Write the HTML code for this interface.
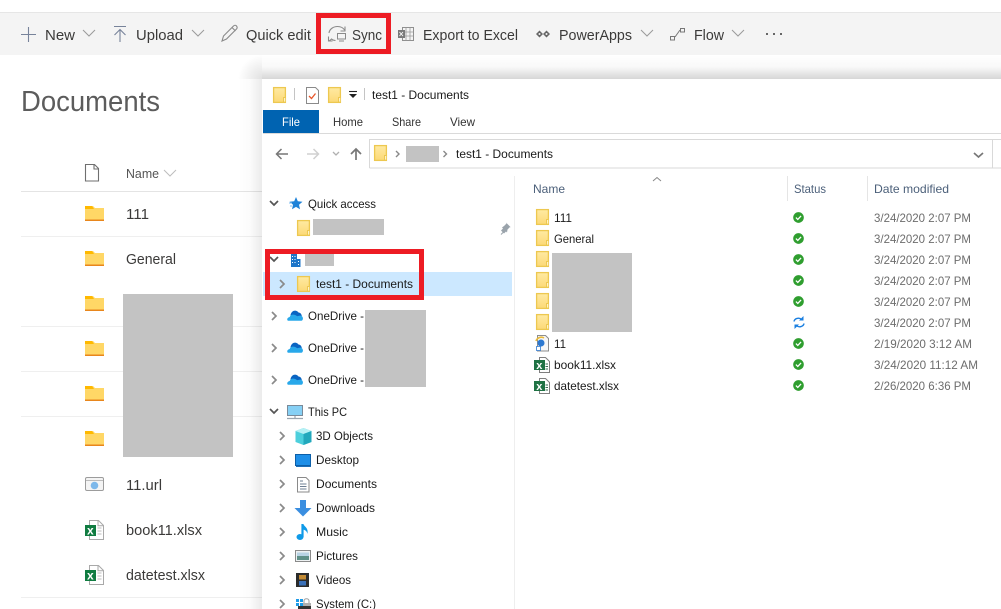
<!DOCTYPE html>
<html><head><meta charset="utf-8"><style>
html,body{margin:0;padding:0;background:#fff;width:1001px;height:609px;overflow:hidden}
svg{display:block;position:absolute;left:0;top:0}
text{font-family:"Liberation Sans",sans-serif;white-space:pre}
.t{font-size:15px;fill:#3b3a39}
.e{font-size:12px;fill:#1a1a1a}
.d{font-size:12px;fill:#6d6d6d}
.h{font-size:12px;fill:#4c607a}
.r{font-size:12px;fill:#333}
.c{fill:none;stroke:#8a8a8a;stroke-width:1.7}
</style></head><body>
<svg width="1001" height="609" viewBox="0 0 1001 609" xmlns="http://www.w3.org/2000/svg">
<defs>
<linearGradient id="st" x1="0" y1="0" x2="0" y2="1"><stop offset="0" stop-color="#000" stop-opacity="0"/><stop offset=".5" stop-color="#000" stop-opacity=".025"/><stop offset="1" stop-color="#000" stop-opacity=".16"/></linearGradient>
<linearGradient id="sl" x1="0" y1="0" x2="1" y2="0"><stop offset="0" stop-color="#000" stop-opacity="0"/><stop offset=".5" stop-color="#000" stop-opacity=".015"/><stop offset="1" stop-color="#000" stop-opacity=".08"/></linearGradient>
<radialGradient id="sc" cx="1" cy="1" r="1"><stop offset="0" stop-color="#000" stop-opacity=".12"/><stop offset="1" stop-color="#000" stop-opacity="0"/></radialGradient>
<linearGradient id="fy" x1="0" y1="0" x2="0" y2="1"><stop offset="0" stop-color="#ffeaa2"/><stop offset="1" stop-color="#fcd976"/></linearGradient>
<symbol id="f" viewBox="0 0 13 16" overflow="visible"><rect x=".6" y=".6" width="11.800" height="14.800" fill="url(#fy)" stroke="#edc850" stroke-width="1.300"/><rect x="10" y="10" width="3" height="6" fill="#edc850"/><rect x="11" y="11" width="1.200" height="3.600" fill="#fff2c4"/></symbol>
<symbol id="sp" viewBox="0 0 19 15"><path d="M0 0h8l2 2h9v13H0z" fill="#ffd766"/><path d="M0 0h7l2 3H0z" fill="#ffb900"/><rect y="13.500" width="19" height="1.500" fill="#e8861c"/></symbol>
<symbol id="ok" viewBox="0 0 12 12"><circle cx="6" cy="6" r="5.800" fill="#2f9e2f"/><path d="M3.200 6.100l2 2 3.600-3.800" fill="none" stroke="#fff" stroke-width="1.400"/></symbol>
<symbol id="x1" viewBox="0 0 19 20"><path d="M4.500.5h9l5 5v14h-14z" fill="#fff" stroke="#a9a9a9"/><path d="M13 .5v5.300h5.500" fill="none" stroke="#a9a9a9"/><path d="M12.500 8h4M12.500 11h4M12.500 14h4" stroke="#bcbcbc"/><rect y="5" width="11" height="11" fill="#107c41"/><text x="2" y="14.500" style="font-size:12px;font-weight:bold;fill:#fff">x</text></symbol>
<symbol id="x2" viewBox="0 0 16 16"><path d="M5.500.5h6l4 4v11h-10z" fill="#fff" stroke="#7f7f7f"/><path d="M11.500 7h2.500M11.500 9.500h2.500M11.500 12h2.500" stroke="#3a6d52"/><rect y="3" width="11" height="10" fill="#1f7244"/><text x="2.200" y="12" style="font-size:11px;font-weight:bold;fill:#fff">x</text></symbol>
<symbol id="od" viewBox="0 0 16 11"><path d="M3.500 5C4.500.5 9-.8 11.500 2.500 13.500 2.700 14.500 4 14.800 6L4 7z" fill="#0a64c2"/><path d="M1 10.800h13.500c2-.6 2-4.300-.5-5-1.500-.4-2.500 0-3.500.7C8.500 4.500 5.500 4 3.500 5.500 3 6.200 2.800 6.700 2.700 7 0 7.500-.4 10 1 10.800z" fill="#28a8ea"/></symbol>
</defs>

<!-- SharePoint -->
<rect x="0" y="12" width="1001" height="1" fill="#e6e6e6"/>
<rect x="0" y="13" width="1001" height="42" fill="#f4f4f4"/>

<path d="M21 34.500h15M28.500 27v15" stroke="#77839a" stroke-width="1.100" fill="none"/>
<text class="t" x="45" y="40" textLength="30" lengthAdjust="spacingAndGlyphs">New</text>
<path d="M83 30l6 6 6-6" fill="none" stroke="#9a9a9a" stroke-width="1"/>
<path d="M114 26.500h12M120 42V29.500M114.500 35l5.500-5.500 5.500 5.500" fill="none" stroke="#77839a" stroke-width="1.100"/>
<text class="t" x="136" y="40" textLength="47" lengthAdjust="spacingAndGlyphs">Upload</text>
<path d="M192 30l6 6 6-6" fill="none" stroke="#9a9a9a" stroke-width="1"/>
<path d="M222 41l1.500-5 10-10c1-1 2.200-1 3 0s1 2 0 3l-10 10zM232 27.500l3.500 3.500" fill="none" stroke="#8a8a8a" stroke-width="1.100"/>
<text class="t" x="246" y="40" textLength="65" lengthAdjust="spacingAndGlyphs">Quick edit</text>
<path d="M329 33c.5-4 4.500-6.500 8.500-6.500 3 0 5.500 1 7 3.500M345 26.500V31h-4.500M328.500 36.500v4.500h4M329 41c1.500-1 2-1.500 2.500-2 1 1 2 1.500 4 1.500" fill="none" stroke="#8a8a8a" stroke-width="1.100"/>
<rect x="337.500" y="33.500" width="8" height="5.500" fill="none" stroke="#8a8a8a" stroke-width="1"/>
<path d="M339 41h5" stroke="#8a8a8a"/>
<text class="t" x="352" y="40" textLength="30" lengthAdjust="spacingAndGlyphs">Sync</text>
<rect x="318.500" y="15.500" width="70" height="36" fill="none" stroke="#ed1c24" stroke-width="5"/>

<rect x="402.500" y="27.500" width="11" height="13" fill="none" stroke="#8f8f8f"/>
<path d="M406 27.500v13M410 27.500v13M402.500 32h11M402.500 36h11" stroke="#9a9a9a" stroke-width=".8"/>
<rect x="398" y="30" width="7" height="8" fill="#7a7a7a"/>
<path d="M399.500 32l3.500 4M403 32l-3.500 4" stroke="#fff" stroke-width=".9"/>
<text class="t" x="423" y="40" textLength="95" lengthAdjust="spacingAndGlyphs">Export to Excel</text>
<path d="M536 34l3.500-3.500 3.500 3.500-3.500 3.500zM543 34l3.500-3.500 3.500 3.500-3.500 3.500z" fill="#666"/>
<circle cx="539.500" cy="34" r="1" fill="#f4f4f4"/><circle cx="546.500" cy="34" r="1" fill="#f4f4f4"/>
<text class="t" x="559" y="40" textLength="73" lengthAdjust="spacingAndGlyphs">PowerApps</text>
<path d="M641 30l6 6 6-6" fill="none" stroke="#9a9a9a" stroke-width="1"/>
<rect x="670.500" y="36.500" width="4" height="3.500" fill="none" stroke="#777"/>
<rect x="680.500" y="28.500" width="4" height="3.500" fill="none" stroke="#777"/>
<path d="M675 37l5-7" stroke="#777"/>
<text class="t" x="694" y="40" textLength="30" lengthAdjust="spacingAndGlyphs">Flow</text>
<path d="M732 30l6 6 6-6" fill="none" stroke="#9a9a9a" stroke-width="1"/>
<g fill="#666"><rect x="766" y="33" width="2" height="2"/><rect x="773" y="33" width="2" height="2"/><rect x="780" y="33" width="2" height="2"/></g>

<text x="21" y="111" style="font-size:29px;fill:#5c5c5c" textLength="139" lengthAdjust="spacingAndGlyphs">Documents</text>

<path d="M85.500 164.500h9l4 4v12.500h-13z M94 164.500v4.500h4.500" fill="#fff" stroke="#6f6f6f" stroke-width="1.100"/>
<text x="126" y="178" style="font-size:12.500px;fill:#555" textLength="33" lengthAdjust="spacingAndGlyphs">Name</text>
<path d="M164 170l6 6 6-6" fill="none" stroke="#bdbdbd"/>
<g fill="#efefef">
<rect x="21" y="191" width="241" height="1" fill="#e4e4e4"/>
<rect x="21" y="236" width="241" height="1"/><rect x="21" y="326" width="241" height="1"/><rect x="21" y="371" width="241" height="1"/><rect x="21" y="416" width="241" height="1"/><rect x="21" y="597" width="241" height="1"/>
</g>
<use href="#sp" x="85" y="206" width="19" height="15"/>
<use href="#sp" x="85" y="251" width="19" height="15"/>
<use href="#sp" x="85" y="296" width="19" height="15"/>
<use href="#sp" x="85" y="341" width="19" height="15"/>
<use href="#sp" x="85" y="386" width="19" height="15"/>
<use href="#sp" x="85" y="431" width="19" height="15"/>
<text x="126" y="219" style="font-size:14.500px;fill:#3b3a39" textLength="23" lengthAdjust="spacingAndGlyphs">111</text>
<text x="126" y="264" style="font-size:14.500px;fill:#3b3a39" textLength="50" lengthAdjust="spacingAndGlyphs">General</text>
<rect x="123" y="294" width="110" height="163" fill="#c3c3c3"/>
<rect x="85.500" y="477.500" width="18" height="13" rx="1.500" fill="#f4f4f4" stroke="#9c9c9c"/>
<path d="M86 480.500h17" stroke="#bbb"/>
<circle cx="94.500" cy="485.500" r="3.800" fill="#7db8ea"/>
<text x="126" y="490" style="font-size:14.500px;fill:#3b3a39" textLength="36" lengthAdjust="spacingAndGlyphs">11.url</text>
<use href="#x1" x="85" y="520" width="19" height="20"/>
<text x="126" y="535" style="font-size:14.500px;fill:#3b3a39" textLength="76" lengthAdjust="spacingAndGlyphs">book11.xlsx</text>
<use href="#x1" x="85" y="565" width="19" height="20"/>
<text x="126" y="580" style="font-size:14.500px;fill:#3b3a39" textLength="79" lengthAdjust="spacingAndGlyphs">datetest.xlsx</text>

<!-- shadow -->
<rect x="262" y="55" width="739" height="24" fill="url(#st)"/>
<rect x="238" y="79" width="24" height="530" fill="url(#sl)"/>
<rect x="238" y="55" width="24" height="24" fill="url(#sc)"/>

<!-- Explorer -->
<rect x="262" y="79" width="739" height="530" fill="#fff"/>
<use href="#f" x="273" y="87" width="13" height="16"/>
<path d="M294.500 88v12M364.500 88v12" stroke="#c4c4c4"/>
<path d="M306.500 87.500h9l3 3v13h-12z" fill="#fff" stroke="#8a8a8a"/>
<path d="M309 96l2.500 2.500 4-5" fill="none" stroke="#e8562a" stroke-width="1.300"/>
<use href="#f" x="328" y="87" width="13" height="16"/>
<path d="M349 91.500h8" stroke="#222" stroke-width="1.100"/>
<path d="M349 94h8l-4 4z" fill="#222"/>
<text class="e" x="372" y="99" textLength="97" lengthAdjust="spacingAndGlyphs">test1 - Documents</text>

<rect x="263" y="110" width="56" height="23" fill="#0063b1"/>
<text x="282" y="126" style="font-size:12px;fill:#fff" textLength="18" lengthAdjust="spacingAndGlyphs">File</text>
<text class="r" x="333" y="126" textLength="30" lengthAdjust="spacingAndGlyphs">Home</text>
<text class="r" x="392" y="126" textLength="29" lengthAdjust="spacingAndGlyphs">Share</text>
<text class="r" x="450" y="126" textLength="25" lengthAdjust="spacingAndGlyphs">View</text>
<rect x="263" y="133" width="738" height="1" fill="#dadada"/>

<path d="M288 154h-11M281.500 149l-5 5 5 5" fill="none" stroke="#777" stroke-width="1.500"/>
<path d="M318 154h-11M313.500 149l5 5-5 5" fill="none" stroke="#d0d0d0" stroke-width="1.500"/>
<path d="M333 152l3 3 3-3" fill="none" stroke="#b0b0b0" stroke-width="1.300"/>
<path d="M356 160v-11M351 154l5-5 5 5" fill="none" stroke="#777" stroke-width="1.700"/>
<path d="M369.500 168V139.500H992.500V168H369.500M992.500 139.500H1001M992.500 168H1001" fill="none" stroke="#d9d9d9"/>
<use href="#f" x="374" y="145" width="13" height="16"/>
<path d="M396 151l3 3-3 3" fill="none" stroke="#888" stroke-width="1.400"/>
<rect x="406" y="146" width="33" height="16" fill="#c3c3c3"/>
<path d="M443.500 151l3 3-3 3" fill="none" stroke="#888" stroke-width="1.400"/>
<text class="e" x="456" y="158" textLength="97" lengthAdjust="spacingAndGlyphs">test1 - Documents</text>
<path d="M974 153l4.500 4 4.500-4" fill="none" stroke="#777" stroke-width="1.700"/>

<rect x="514" y="176" width="1" height="433" fill="#eeeeee"/>

<!-- Nav pane -->
<path d="M270 201l4 4 4-4" fill="none" stroke="#555" stroke-width="1.700"/>
<path d="M296 197l1.800 4.300 4.700.4-3.500 3 1 4.600-4-2.400-4 2.400 1-4.600-3.500-3 4.700-.4z" fill="#1e82d8"/>
<path d="M289 203h3M290 206h2" stroke="#7dbdf0"/>
<text class="e" x="308" y="208" textLength="68" lengthAdjust="spacingAndGlyphs">Quick access</text>
<use href="#f" x="297" y="220" width="13" height="16"/>
<rect x="313" y="219" width="71" height="16" fill="#c3c3c3"/>
<path d="M502 227.500l1 1-2 2 3 3 2-2 1 1 .5-3 2.500-2.500 1 .5-5-5 .5 1-2.500 2.500z" fill="#9aa3ab"/>
<path d="M503.500 232l-2.500 2.500" stroke="#9aa3ab"/>

<path d="M270 257l4 4 4-4" fill="none" stroke="#555" stroke-width="1.700"/>
<rect x="291" y="254" width="6" height="13" fill="#1d75c8"/>
<rect x="297" y="259" width="3.500" height="8" fill="#1d75c8"/>
<g fill="#fff"><rect x="292" y="256" width="1" height="1"/><rect x="294.500" y="256" width="1" height="1"/><rect x="292" y="259" width="1" height="1"/><rect x="294.500" y="259" width="1" height="1"/><rect x="292" y="262" width="1" height="1"/><rect x="294.500" y="262" width="1" height="1"/><rect x="298" y="261" width="1" height="1"/><rect x="298" y="264" width="1" height="1"/></g>
<rect x="305" y="254" width="29" height="12" fill="#c3c3c3"/>
<rect x="263" y="272" width="249" height="24" fill="#cce8ff"/>
<path d="M280 280l4 4-4 4" fill="none" stroke="#8a8a8a" stroke-width="1.700"/>
<use href="#f" x="297" y="276" width="13" height="16"/>
<text class="e" x="316" y="288" textLength="97" lengthAdjust="spacingAndGlyphs">test1 - Documents</text>
<rect x="267.500" y="251.500" width="154" height="46" fill="none" stroke="#ed1c24" stroke-width="5"/>

<path d="M272 312l4 4-4 4" class="c"/>
<use href="#od" x="287" y="310" width="16" height="11"/>
<text class="e" x="308" y="320" textLength="56" lengthAdjust="spacingAndGlyphs">OneDrive -</text>
<path d="M272 344l4 4-4 4" class="c"/>
<use href="#od" x="287" y="342" width="16" height="11"/>
<text class="e" x="308" y="352" textLength="56" lengthAdjust="spacingAndGlyphs">OneDrive -</text>
<path d="M272 376l4 4-4 4" class="c"/>
<use href="#od" x="287" y="374" width="16" height="11"/>
<text class="e" x="308" y="384" textLength="56" lengthAdjust="spacingAndGlyphs">OneDrive -</text>
<rect x="365" y="310" width="61" height="77" fill="#c3c3c3"/>

<path d="M270 409l4 4 4-4" fill="none" stroke="#555" stroke-width="1.700"/>
<rect x="287.500" y="405.500" width="15" height="10" fill="#86d0f5" stroke="#7a8a99"/>
<path d="M295 416v2M287 418.500h16" stroke="#9aa5af" stroke-width="1.200"/>
<text class="e" x="308" y="416" textLength="39" lengthAdjust="spacingAndGlyphs">This PC</text>

<path d="M280 432l4 4-4 4" class="c"/><path d="M280 456l4 4-4 4" class="c"/><path d="M280 480l4 4-4 4" class="c"/><path d="M280 504l4 4-4 4" class="c"/><path d="M280 528l4 4-4 4" class="c"/><path d="M280 552l4 4-4 4" class="c"/><path d="M280 576l4 4-4 4" class="c"/><path d="M280 600l4 4-4 4" class="c"/>

<path d="M303.500 428l8 3v11l-8 3-8-3v-11z" fill="#4ccfdc"/>
<path d="M303.500 428l8 3-8 3-8-3z" fill="#b5f0f4"/>
<path d="M303.500 434v11l8-3v-11z" fill="#22a8bc"/>
<text class="e" x="316" y="440" textLength="57" lengthAdjust="spacingAndGlyphs">3D Objects</text>
<rect x="295.500" y="454.500" width="15" height="11" fill="#1e8fe8" stroke="#0d5fa8"/>
<path d="M296 466.500h15" stroke="#1d6fb8"/>
<text class="e" x="316" y="464" textLength="43" lengthAdjust="spacingAndGlyphs">Desktop</text>
<path d="M297.500 477.500h8.500l3 3v11.500h-11.500z" fill="#fff" stroke="#8a8a8a"/>
<path d="M300 481h3M300 484h6.500M300 486.500h6.500M300 489h6.500" stroke="#6d7f93"/>
<text class="e" x="316" y="488" textLength="61" lengthAdjust="spacingAndGlyphs">Documents</text>
<path d="M300 500h6v8h5.500l-8.500 8.500-8.500-8.500h5.500z" fill="#3a8ee0"/>
<text class="e" x="316" y="512" textLength="59" lengthAdjust="spacingAndGlyphs">Downloads</text>
<path d="M302.500 524v13" stroke="#0f9ae8" stroke-width="2.200"/>
<ellipse cx="300" cy="537" rx="3.500" ry="3" fill="#0f9ae8"/>
<path d="M303 524c2 3 5.500 4 4.500 10-.5-2.500-2-4-4.500-4.500z" fill="#0f9ae8"/>
<text class="e" x="316" y="536" textLength="32" lengthAdjust="spacingAndGlyphs">Music</text>
<rect x="295.500" y="550.500" width="15" height="11" fill="#eef1f2" stroke="#8a8a8a"/>
<path d="M297 556h12v4h-12z" fill="#5f9088"/>
<path d="M297 552.500h12v3.500h-12z" fill="#b8d3e4"/>
<text class="e" x="316" y="560" textLength="42" lengthAdjust="spacingAndGlyphs">Pictures</text>
<rect x="296" y="573" width="13" height="14" fill="#2b2b2b"/>
<rect x="299" y="575" width="7" height="4.500" fill="#c28a33"/>
<rect x="299" y="581" width="7" height="4.500" fill="#3a70b8"/>
<text class="e" x="316" y="584" textLength="35" lengthAdjust="spacingAndGlyphs">Videos</text>
<g fill="#1e9be8"><rect x="296" y="599" width="3" height="3"/><rect x="300" y="599" width="3" height="3"/><rect x="296" y="603" width="3" height="3"/><rect x="300" y="603" width="3" height="3"/></g>
<path d="M304 603v-2c0-3 5-3 5 0v2" fill="none" stroke="#a0a0a0"/>
<rect x="303" y="603" width="8" height="3" fill="#b0b0b0"/>
<rect x="298" y="606" width="13" height="3" fill="#333"/>
<text class="e" x="316" y="608" textLength="60" lengthAdjust="spacingAndGlyphs">System (C:)</text>

<!-- File list -->
<path d="M653 181l4-3.500 4 3.500" fill="none" stroke="#888"/>
<text class="h" x="533" y="193" textLength="32" lengthAdjust="spacingAndGlyphs">Name</text>
<text class="h" x="794" y="193" textLength="32" lengthAdjust="spacingAndGlyphs">Status</text>
<text class="h" x="874" y="193" textLength="75" lengthAdjust="spacingAndGlyphs">Date modified</text>
<rect x="787" y="176" width="1" height="25" fill="#e5e5e5"/>
<rect x="867" y="176" width="1" height="25" fill="#e5e5e5"/>

<use href="#f" x="536" y="209" width="13" height="16"/>
<use href="#f" x="536" y="230" width="13" height="16"/>
<use href="#f" x="536" y="251" width="13" height="16"/>
<use href="#f" x="536" y="272" width="13" height="16"/>
<use href="#f" x="536" y="293" width="13" height="16"/>
<use href="#f" x="536" y="314" width="13" height="16"/>
<rect x="552" y="253" width="80" height="79" fill="#c3c3c3"/>
<text class="e" x="554" y="222" textLength="18" lengthAdjust="spacingAndGlyphs">111</text>
<text class="e" x="554" y="243" textLength="40" lengthAdjust="spacingAndGlyphs">General</text>
<path d="M537.500 335.500h8l3 3v12.500h-11z" fill="#f6f6f6" stroke="#8d8d8d"/>
<path d="M536 341c1-3 5-5 8-3" fill="none" stroke="#e9b93a" stroke-width="1.600"/>
<circle cx="541" cy="343" r="3.500" fill="#2c78d0"/>
<path d="M536.500 346.500h4v4h-4z" fill="#fff" stroke="#2c78d0" stroke-width=".8"/>
<text class="e" x="554" y="348" textLength="12" lengthAdjust="spacingAndGlyphs">11</text>
<use href="#x2" x="534" y="357" width="16" height="16"/>
<text class="e" x="554" y="369" textLength="62" lengthAdjust="spacingAndGlyphs">book11.xlsx</text>
<use href="#x2" x="534" y="378" width="16" height="16"/>
<text class="e" x="554" y="390" textLength="65" lengthAdjust="spacingAndGlyphs">datetest.xlsx</text>

<use href="#ok" x="793" y="212" width="11" height="11"/>
<use href="#ok" x="793" y="233" width="11" height="11"/>
<use href="#ok" x="793" y="254" width="11" height="11"/>
<use href="#ok" x="793" y="275" width="11" height="11"/>
<use href="#ok" x="793" y="296" width="11" height="11"/>
<path d="M794 321.500c.5-3 5-4.500 7.500-2M804 323.500c-.5 3-5 4.500-7.500 2" fill="none" stroke="#1a7fe0" stroke-width="1.400"/>
<path d="M803.500 316v4.500h-4.500zM794.500 329v-4.500h4.500z" fill="#1a7fe0"/>
<use href="#ok" x="793" y="338" width="11" height="11"/>
<use href="#ok" x="793" y="359" width="11" height="11"/>
<use href="#ok" x="793" y="380" width="11" height="11"/>

<text class="d" x="874" y="222" textLength="97" lengthAdjust="spacingAndGlyphs">3/24/2020 2:07 PM</text>
<text class="d" x="874" y="243" textLength="97" lengthAdjust="spacingAndGlyphs">3/24/2020 2:07 PM</text>
<text class="d" x="874" y="264" textLength="97" lengthAdjust="spacingAndGlyphs">3/24/2020 2:07 PM</text>
<text class="d" x="874" y="285" textLength="97" lengthAdjust="spacingAndGlyphs">3/24/2020 2:07 PM</text>
<text class="d" x="874" y="306" textLength="97" lengthAdjust="spacingAndGlyphs">3/24/2020 2:07 PM</text>
<text class="d" x="874" y="327" textLength="97" lengthAdjust="spacingAndGlyphs">3/24/2020 2:07 PM</text>
<text class="d" x="874" y="348" textLength="98" lengthAdjust="spacingAndGlyphs">2/19/2020 3:12 AM</text>
<text class="d" x="874" y="369" textLength="104" lengthAdjust="spacingAndGlyphs">3/24/2020 11:12 AM</text>
<text class="d" x="874" y="390" textLength="97" lengthAdjust="spacingAndGlyphs">2/26/2020 6:36 PM</text>
</svg>
</body></html>
